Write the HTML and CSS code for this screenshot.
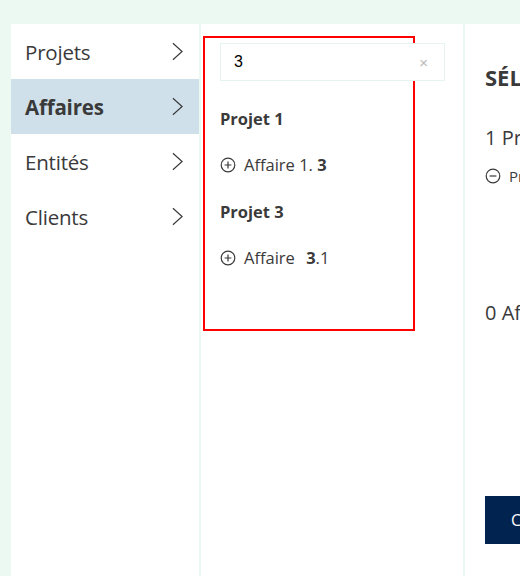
FILE: index.html
```html
<!DOCTYPE html>
<html lang="fr">
<head>
<meta charset="utf-8">
<title>Sélection</title>
<link rel="stylesheet" href="styles.css">
</head>
<body>
<div class="layout">
  <nav class="menu">
    <div class="menu-item"><span>Projets</span><svg class="chev" viewBox="0 0 12 20"><path d="M1 1 L11 10 L1 19" /></svg></div>
    <div class="menu-item active"><span>Affaires</span><svg class="chev" viewBox="0 0 12 20"><path d="M1 1 L11 10 L1 19" /></svg></div>
    <div class="menu-item"><span>Entités</span><svg class="chev" viewBox="0 0 12 20"><path d="M1 1 L11 10 L1 19" /></svg></div>
    <div class="menu-item"><span>Clients</span><svg class="chev" viewBox="0 0 12 20"><path d="M1 1 L11 10 L1 19" /></svg></div>
  </nav>
  <section class="search-col">
    <div class="result-box">
      <div class="search">
        <span class="search-value">3</span>
        <span class="clear">×</span>
      </div>
      <div class="group">Projet 1</div>
      <div class="item"><svg class="ico" viewBox="0 0 16 16"><circle cx="8" cy="8" r="6.8"/><path d="M8 4.6 V11.4 M4.6 8 H11.4"/></svg><span>Affaire 1. <b>3</b></span></div>
      <div class="group">Projet 3</div>
      <div class="item"><svg class="ico" viewBox="0 0 16 16"><circle cx="8" cy="8" r="6.8"/><path d="M8 4.6 V11.4 M4.6 8 H11.4"/></svg><span>Affaire <b class="wide">3</b>.1</span></div>
    </div>
  </section>
  <section class="selection">
    <h2 class="sel-title">SÉLECTION</h2>
    <div class="sel-count">1 Projet sélectionné</div>
    <div class="sel-item"><svg class="ico" viewBox="0 0 16 16"><circle cx="8" cy="8" r="6.8"/><path d="M4.6 8 H11.4"/></svg><span>Projet 2</span></div>
    <div class="sel-count zero">0 Affaire sélectionnée</div>
    <button class="confirm">Confirmer</button>
  </section>
</div>
</body>
</html>
```
FILE: styles.css
```css
html, body {
  margin: 0;
  height: 100%;
}
body {
  background: #ecf8f2;
  font-family: "Open Sans", "Noto Sans", sans-serif;
  color: #3a3a3a;
  overflow: hidden;
}
.layout {
  box-sizing: border-box;
  height: 100%;
  padding: 24px 0 0 11px;
  display: grid;
  grid-template-columns: 188px 262px 1fr;
  column-gap: 2px;
}
.menu {
  background: #fff;
}
.menu-item {
  height: 55px;
  display: flex;
  align-items: center;
  justify-content: space-between;
  padding: 0 16px 0 14px;
  font-size: 20.5px;
  letter-spacing: -0.2px;
}
.menu-item.active {
  background: #cfe0ea;
  font-weight: 700;
}
.chev {
  width: 11px;
  height: 19px;
  fill: none;
  stroke: #3a3a3a;
  stroke-width: 1.3;
}
.search-col {
  background: #fff;
  padding: 12px 0 0 2px;
  min-width: 0;
}
.result-box {
  box-sizing: border-box;
  width: 212px;
  height: 295px;
  border: 2px solid #ff0000;
  padding: 5px 0 0 15px;
}
.search {
  box-sizing: border-box;
  width: 225px;
  height: 38px;
  border: 1px solid #e6f4ef;
  background: #fff;
  display: flex;
  align-items: center;
  justify-content: space-between;
  padding: 0 16px 0 13px;
  font-family: "Liberation Sans", Arial, sans-serif;
  font-size: 16px;
  color: #000;
}
.clear {
  color: #b8b8b8;
  font-size: 15px;
}
.group {
  height: 46px;
  display: flex;
  align-items: center;
  font-weight: 700;
  font-size: 16.5px;
}
.search + .group {
  margin-top: 14px;
}
.item {
  height: 47px;
  display: flex;
  align-items: center;
  gap: 8px;
  font-size: 16.5px;
}
.item b {
  font-weight: 700;
}
.item b.wide {
  margin-left: 7px;
}
.ico {
  width: 16px;
  height: 16px;
  fill: none;
  stroke: #3a3a3a;
  stroke-width: 1.2;
  flex: none;
}
.selection {
  background: #fff;
  padding: 38px 0 0 20px;
  overflow: hidden;
  white-space: nowrap;
  display: flex;
  flex-direction: column;
  align-items: flex-start;
}
.sel-title {
  margin: 0;
  font-size: 22px;
  font-weight: 700;
  line-height: 30px;
}
.sel-count {
  font-size: 20px;
  margin-top: 33px;
  line-height: 26px;
}
.sel-item {
  display: flex;
  align-items: center;
  gap: 8px;
  font-size: 15px;
  margin-top: 15px;
  line-height: 20px;
}
.sel-count.zero {
  margin-top: 114px;
}
.confirm {
  margin-top: 170px;
  height: 48px;
  border: 0;
  background: #012350;
  color: #fff;
  font-family: "Open Sans", "Noto Sans", sans-serif;
  font-size: 16px;
  padding: 0 26px;
  white-space: nowrap;
}
```
